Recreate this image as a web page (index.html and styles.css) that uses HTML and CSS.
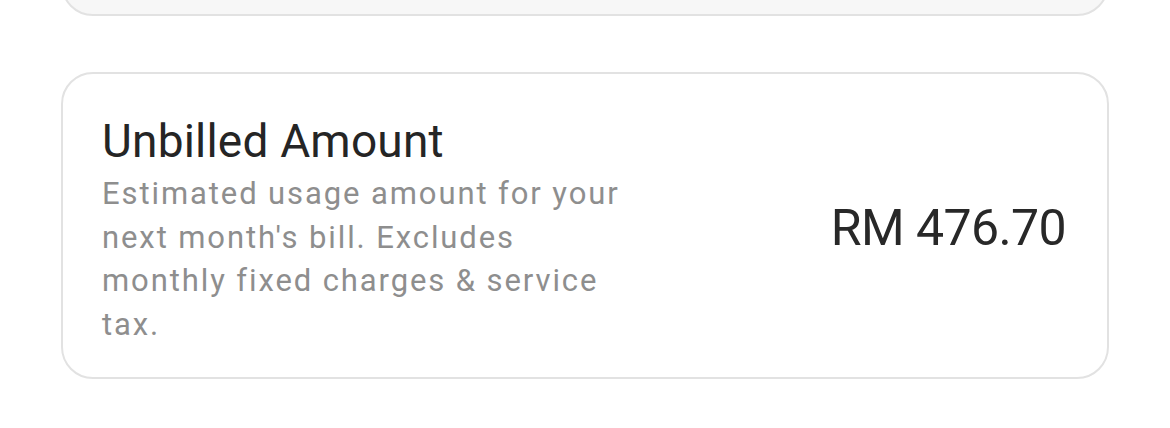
FILE: index.html
```html
<!DOCTYPE html>
<html>
<head>
<meta charset="utf-8">
<link rel="stylesheet" href="styles.css">
</head>
<body>
<div class="page">
  <div class="card card-prev"></div>
  <div class="card card-unbilled">
    <div class="info">
      <div class="title">Unbilled Amount</div>
      <div class="desc">Estimated usage amount for your next month's bill. Excludes monthly fixed charges &amp; service tax.</div>
    </div>
    <div class="amount">RM 476.70</div>
  </div>
</div>
</body>
</html>
```
FILE: styles.css
```css
html, body {
  margin: 0;
  padding: 0;
  background: #ffffff;
}
body {
  font-family: Roboto, "Noto Sans", sans-serif;
  width: 1170px;
  height: 428px;
  overflow: hidden;
}
.page {
  display: flex;
  flex-direction: column;
  gap: 56px;
  padding: 0 61px;
}
.card {
  border: 2.5px solid #e2e2e2;
  border-radius: 32px;
  box-sizing: border-box;
}
.card-prev {
  height: 100px;
  margin-top: -84px;
  background: #f7f7f7;
}
.card-unbilled {
  height: 307px;
  background: #ffffff;
  display: flex;
  align-items: flex-start;
  justify-content: space-between;
  padding: 42px 41px 30px 39px;
}
.info {
  width: 528px;
}
.title {
  font-size: 46px;
  line-height: 50px;
  letter-spacing: 0.2px;
  color: #252525;
  margin-bottom: 6px;
}
.desc {
  font-size: 31px;
  line-height: 43.5px;
  letter-spacing: 1.9px;
  color: #8e8e8e;
}
.amount {
  align-self: center;
  margin-bottom: 7px;
  font-size: 50px;
  line-height: 60px;
  letter-spacing: -0.6px;
  color: #282828;
}
```
